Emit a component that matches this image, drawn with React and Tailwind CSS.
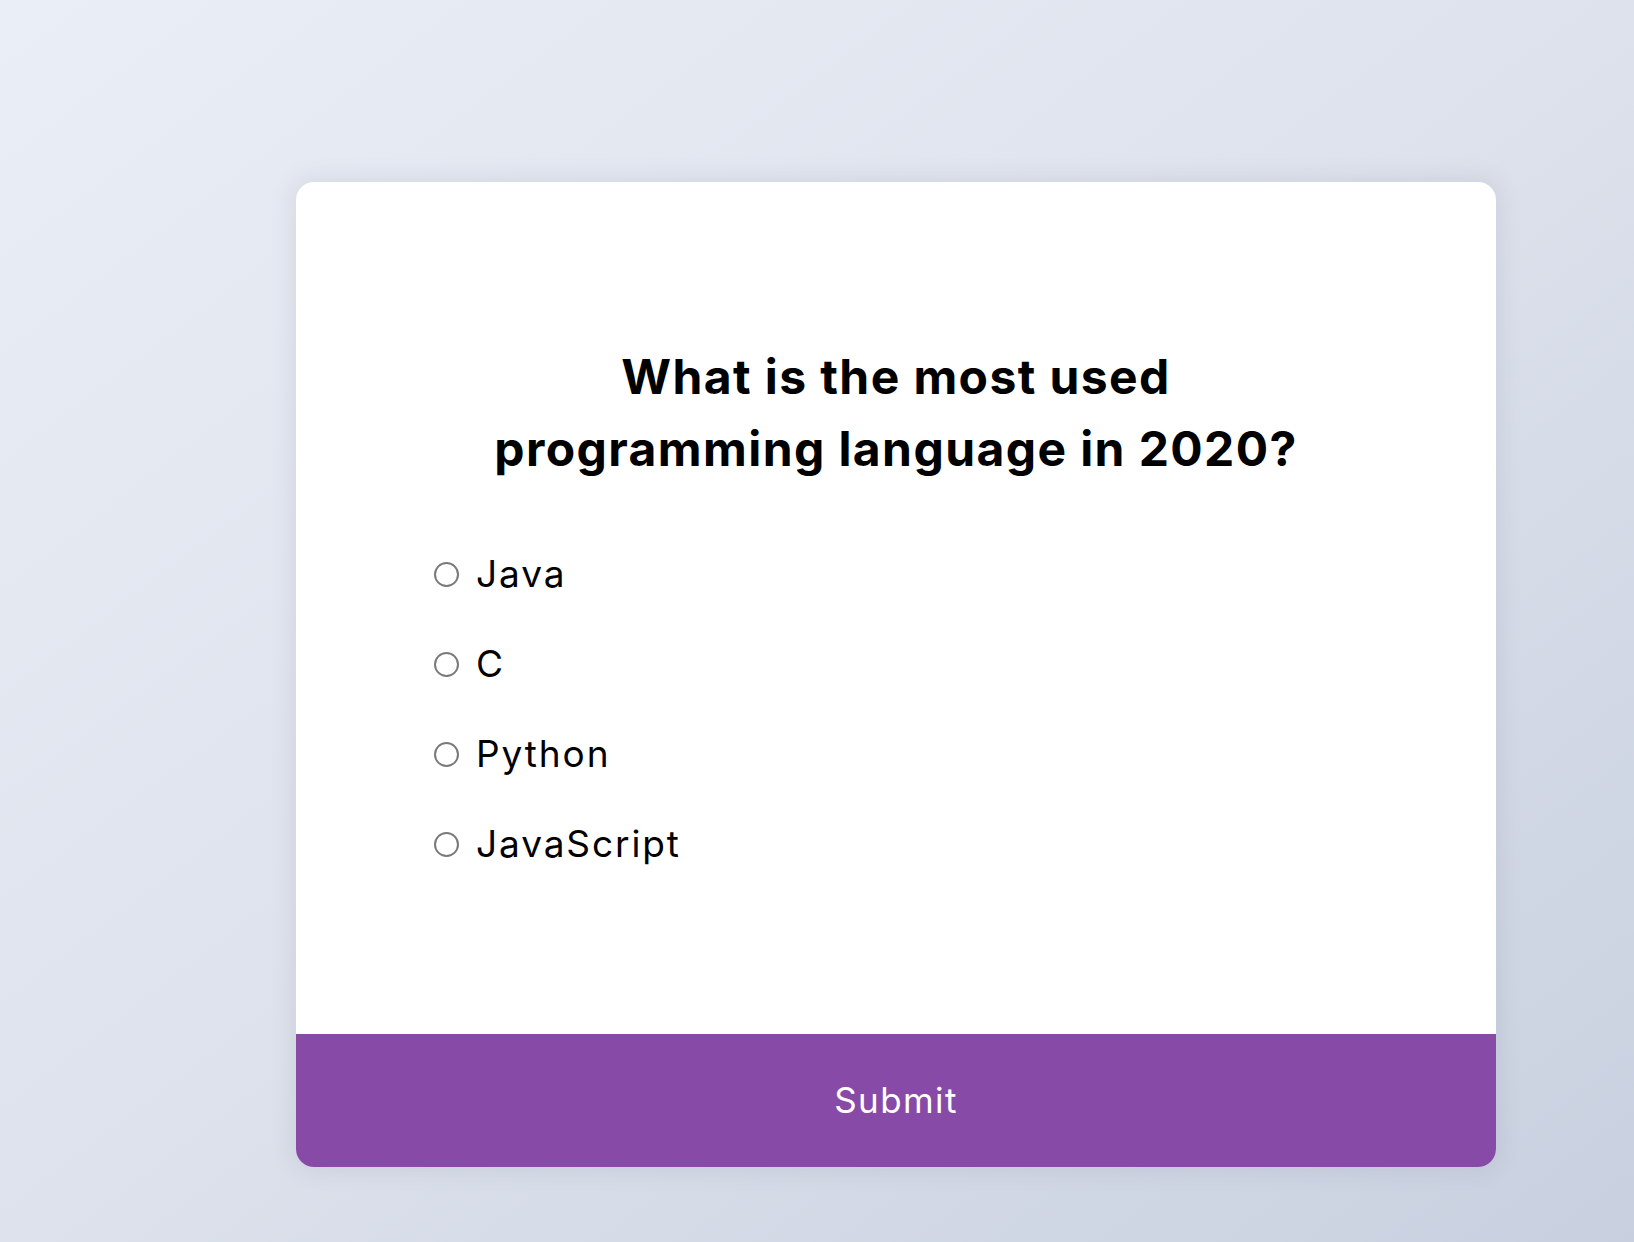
import React, { useState } from 'react'

const options = ['Java', 'C', 'Python', 'JavaScript']

const App = () => {
    const [answer, setAnswer] = useState(null)

    return (
        <div className="min-h-screen w-full bg-gradient-to-br from-[#eaeef6] via-[#dde2ec] to-[#c8d0df] pt-[182px] pl-[296px] pb-[75px] font-['Inter',sans-serif]">
            <div className="w-[1200px] rounded-[18px] bg-white overflow-hidden shadow-[0_0_22px_4px_rgba(100,100,120,0.12)]">
                <div className="h-[852px] px-[128px] pt-[159px]">
                    <h2 className="text-center text-[48px] leading-[72px] font-bold text-black tracking-[1.4px]">
                        What is the most used
                        <br />
                        programming language in 2020?
                    </h2>

                    <ul className="mt-[44px]">
                        {options.map((opt) => (
                            <li key={opt} className="h-[90px] flex items-center">
                                <label className="flex items-center cursor-pointer">
                                    <input
                                        type="radio"
                                        name="answer"
                                        checked={answer === opt}
                                        onChange={() => setAnswer(opt)}
                                        className="appearance-none w-[25px] h-[25px] ml-[10px] m-0 rounded-full border-2 border-[#7a7a7a] bg-white checked:border-[7px] checked:border-[#884aa7]"
                                    />
                                    <span className="ml-[17px] text-[37px] leading-[44px] text-black tracking-[1.9px]">
                                        {opt}
                                    </span>
                                </label>
                            </li>
                        ))}
                    </ul>
                </div>

                <button className="w-full h-[133px] bg-[#884aa7] text-white text-[35px] leading-none tracking-[1.4px] flex items-center justify-center">
                    Submit
                </button>
            </div>
        </div>
    )
}

export default App
